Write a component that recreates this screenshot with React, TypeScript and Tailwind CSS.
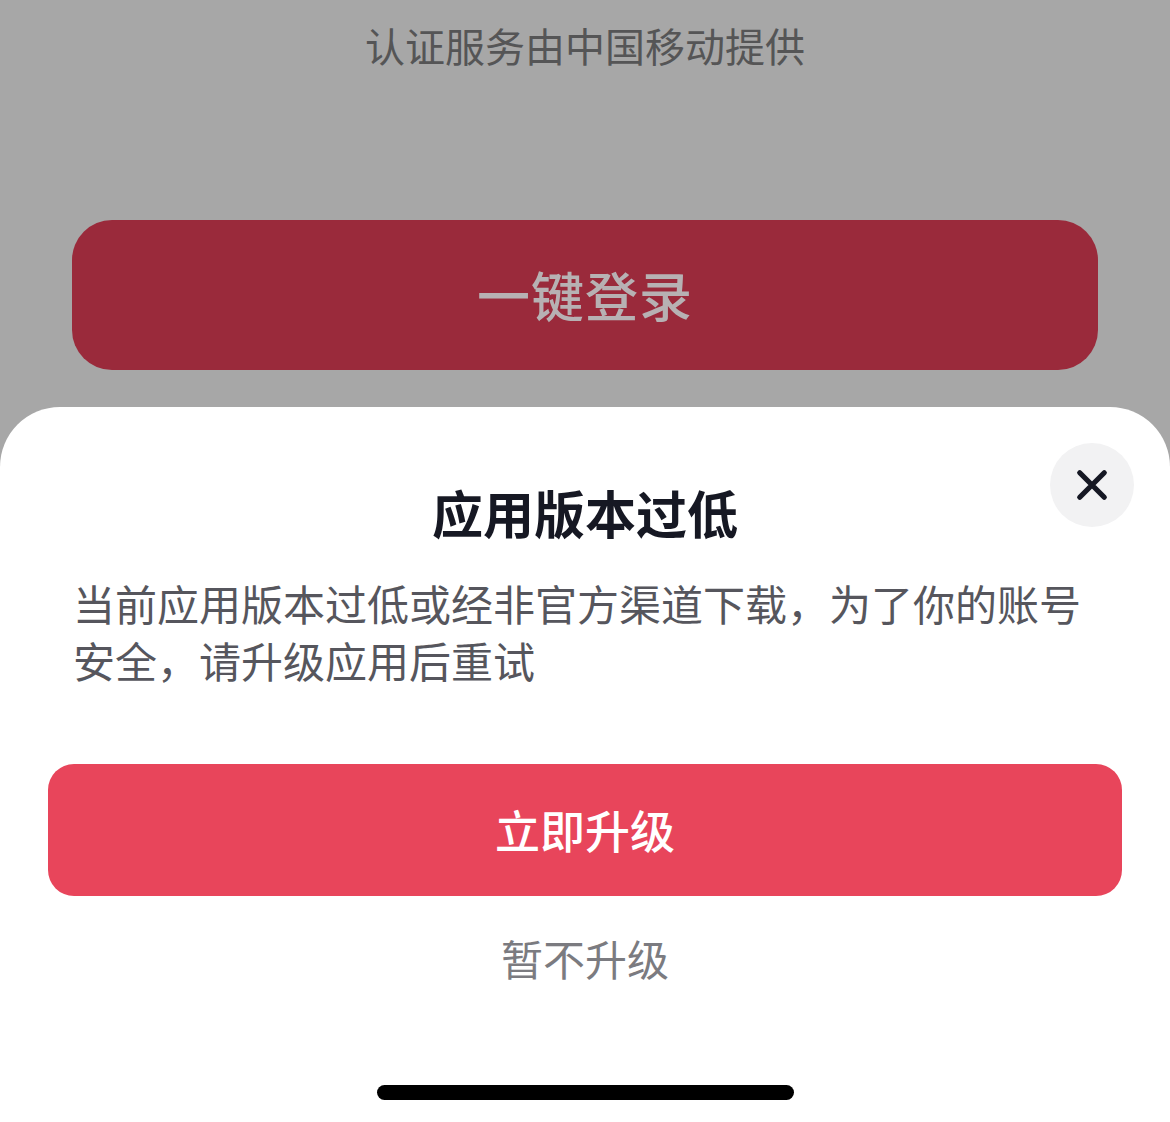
const font = { fontFamily: '"Noto Sans CJK SC", "Noto Sans", sans-serif' };

function CloseIcon() {
  return (
    <svg viewBox="0 0 24 24" className="w-[42px] h-[42px]" fill="none" stroke="#161823" strokeWidth={3} strokeLinecap="round">
      <path d="M5 5L19 19M19 5L5 19" />
    </svg>
  );
}

export default function App() {
  return (
    <div className="w-full h-[1122px] bg-[#a7a7a7] flex flex-col overflow-hidden" style={font}>
      {/* 背景登录页 (被遮罩) */}
      <div className="flex flex-col items-center">
        <p className="pt-[19px] text-[40px] leading-[52px] text-[#555556]">认证服务由中国移动提供</p>
        <div className="mt-[149px] w-[1026px] h-[150px] rounded-[40px] bg-[#9a2a3b] flex items-center justify-center">
          <span className="text-[53px] font-medium text-[#b7b1b3] tracking-[1px]">一键登录</span>
        </div>
      </div>

      {/* 弹出面板 */}
      <div className="relative mt-[37px] flex-1 bg-white rounded-t-[60px] flex flex-col items-center">
        <button className="absolute top-[36px] right-[36px] w-[84px] h-[84px] rounded-full bg-[#f2f2f3] flex items-center justify-center">
          <CloseIcon />
        </button>
        <h2 className="pt-[70px] text-[51px] leading-[70px] font-bold text-[#161823]">应用版本过低</h2>
        <p className="mt-[27px] self-stretch px-[73px] text-[42px] leading-[57px] text-[#56565d]">
          当前应用版本过低或经非官方渠道下载，为了你的账号安全，请升级应用后重试
        </p>
        <div className="mt-[76px] self-stretch px-[48px]">
          <div className="h-[132px] rounded-[26px] bg-[#e8455b] flex items-center justify-center">
            <span className="text-[45px] font-medium text-white">立即升级</span>
          </div>
        </div>
        <p className="mt-[32px] text-[42px] leading-[60px] text-[#7b7b80]">暂不升级</p>
        <div className="mt-[97px] w-[417px] h-[15px] rounded-full bg-black" />
      </div>
    </div>
  );
}
